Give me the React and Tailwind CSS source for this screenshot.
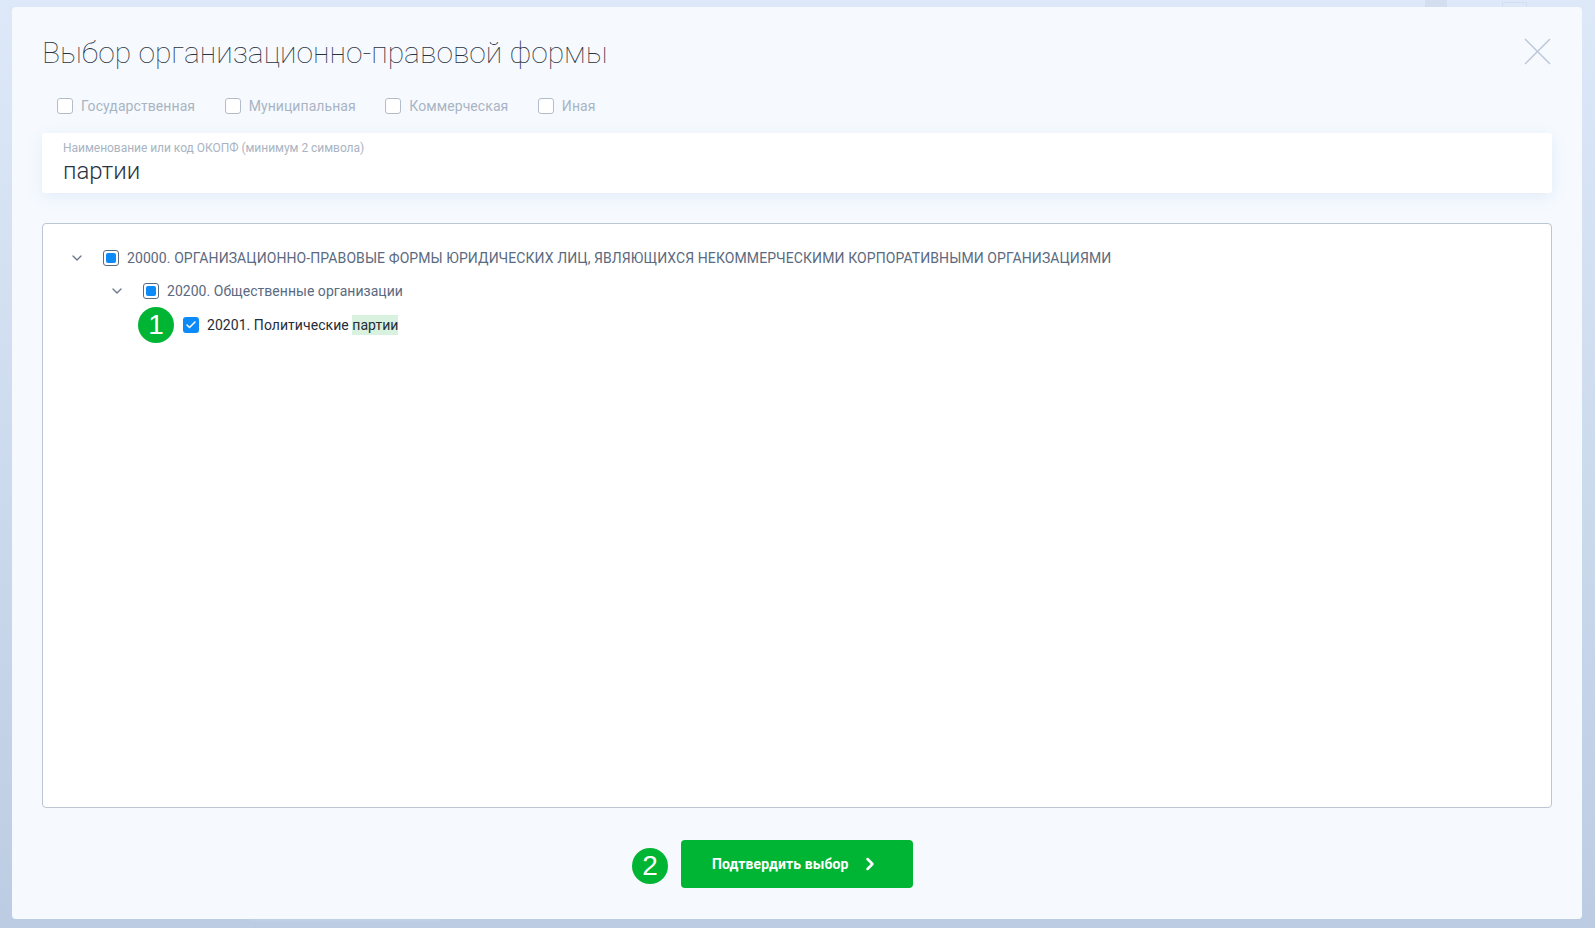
import React from 'react';
import { ChevronDown, ChevronRight, Check } from 'lucide-react';

const filters = ['Государственная', 'Муниципальная', 'Коммерческая', 'Иная'];

function Mixed() {
  return (
    <span className="flex h-4 w-4 shrink-0 items-center justify-center rounded-[3px] border border-[#5b6b80] bg-white">
      <span className="h-[10px] w-[10px] rounded-[2px] bg-[#0c8af7]" />
    </span>
  );
}

function Badge({ children }) {
  return (
    <span className="flex h-9 w-9 shrink-0 items-center justify-center rounded-full bg-[#00b533] font-['Liberation_Sans',sans-serif] text-[28px] leading-none text-white">
      {children}
    </span>
  );
}

function Row({ indent, children }) {
  return <div className={`flex h-[33.5px] items-center ${indent}`}>{children}</div>;
}

export default function App() {
  return (
    <div className="relative h-[928px] w-full overflow-hidden bg-gradient-to-b from-[#dde9f9] to-[#bccce2] pl-[12px] pr-[13px] pt-[7px] font-['Roboto',sans-serif]">
      {/* blurred page behind the dialog */}
      <div className="absolute left-[1425px] top-0 h-[7px] w-[22px] bg-[#d3dfef]" />
      <div className="absolute left-[1502px] top-[2px] h-[5px] w-[25px] border border-b-0 border-[#d3e0f1]" />
      <div className="absolute left-[250px] top-[919px] h-[3px] w-[190px] bg-[#c0cfe4]" />

      <div className="relative h-[912px] rounded-[4px] bg-[#f6faff] px-[30px] pt-[26px]">
        <div className="flex h-[40px] items-center justify-between">
          <h1 className="text-[30px] font-thin leading-10 text-[#2b3340]">Выбор организационно-правовой формы</h1>
          <svg width="27" height="27" viewBox="0 0 27 27" className="mb-1 mr-px text-[#bcc8d8]">
            <path d="M1 1L26 26M26 1L1 26" stroke="currentColor" strokeWidth="1.5" fill="none" />
          </svg>
        </div>

        <div className="mt-[23px] flex h-5 items-center gap-[29.5px] pl-[15px]">
          {filters.map((name) => (
            <label key={name} className="flex items-center gap-2 text-sm tracking-[0.08px] text-[#a9b4c3]">
              <span className="h-4 w-4 rounded-[3px] border border-[#b3bdca] bg-white" />
              {name}
            </label>
          ))}
        </div>

        <div className="mt-[17px] h-[60px] rounded-[3px] bg-white px-[21px] pt-2 shadow-[0_4px_16px_rgba(90,130,190,0.12)]">
          <div className="text-xs leading-[15px] tracking-[-0.03px] text-[#a9b4c3]">Наименование или код ОКОПФ (минимум 2 символа)</div>
          <div className="mt-px text-2xl font-light leading-[29px] text-[#2b3340]">партии</div>
        </div>

        <div className="mt-[30px] h-[585px] rounded-[4px] border border-[#bcc6d2] bg-white pl-[26px] pt-[17px] text-sm text-[#5a6a80]">
          <Row indent="pl-0">
            <ChevronDown className="mr-[18px] h-4 w-4 shrink-0 text-[#6b788b]" />
            <Mixed />
            <span className="ml-2 tracking-[0.09px]">20000. ОРГАНИЗАЦИОННО-ПРАВОВЫЕ ФОРМЫ ЮРИДИЧЕСКИХ ЛИЦ, ЯВЛЯЮЩИХСЯ НЕКОММЕРЧЕСКИМИ КОРПОРАТИВНЫМИ ОРГАНИЗАЦИЯМИ</span>
          </Row>
          <Row indent="pl-10">
            <ChevronDown className="mr-[18px] h-4 w-4 shrink-0 text-[#6b788b]" />
            <Mixed />
            <span className="ml-2 tracking-[0.03px]">20200. Общественные организации</span>
          </Row>
          <Row indent="pl-[114px]">
            <span className="relative flex h-4 w-4 shrink-0 items-center justify-center rounded-[3px] bg-[#0c8af7]">
              <Check className="h-3 w-3 text-white" strokeWidth={3} />
              <span className="absolute left-[-45px] top-[-10px]">
                <Badge>1</Badge>
              </span>
            </span>
            <span className="ml-2 tracking-[0.05px] text-[#252d38]">
              20201. Политические <span className="bg-[#d9f2df] py-[2px]">партии</span>
            </span>
          </Row>
        </div>

        <div className="mt-[32px] flex justify-center">
          <div className="relative">
            <span className="absolute left-[-49px] top-[8px]">
              <Badge>2</Badge>
            </span>
            <button className="flex h-12 w-[232px] items-center rounded-[4px] bg-[#00b533] pb-px pl-[31px] text-sm font-bold tracking-[0.1px] text-white">
              Подтвердить выбор
              <ChevronRight className="ml-[12px] h-5 w-5" strokeWidth={3} />
            </button>
          </div>
        </div>
      </div>
    </div>
  );
}
